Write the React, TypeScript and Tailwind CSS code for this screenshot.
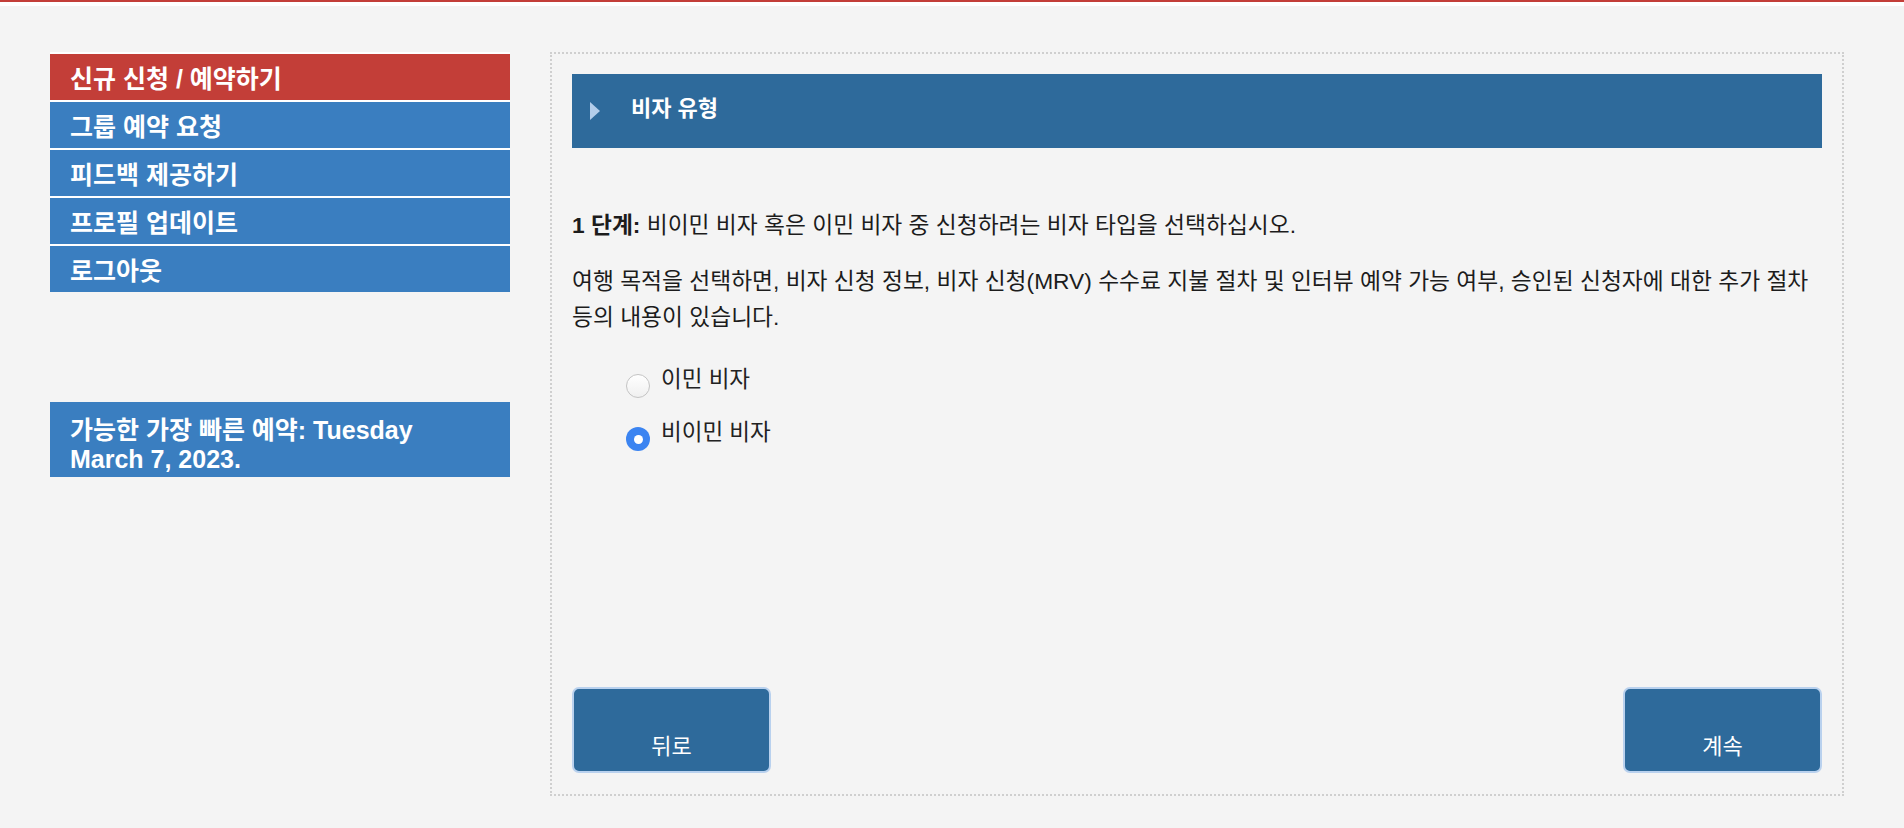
import { useState } from 'react';

const menu = ['신규 신청 / 예약하기', '그룹 예약 요청', '피드백 제공하기', '프로필 업데이트', '로그아웃'];

export default function App() {
  const [visa, setVisa] = useState('non');

  return (
    <div
      className="min-h-screen w-full bg-[#f4f4f4] text-[#1c1c1c]"
      style={{ fontFamily: '"Liberation Sans", "Noto Sans CJK KR", sans-serif' }}
    >
      {/* top strip */}
      <div className="h-[2px] bg-[#c33e38]" />
      <div className="h-[4px] bg-white" />

      <div className="flex gap-[40px] pl-[50px] pt-[46px]">
        {/* Sidebar */}
        <aside className="w-[460px] shrink-0">
          <ul>
            {menu.map((item, i) => (
              <li
                key={item}
                className={
                  'flex h-[48px] items-center border-t-2 border-white px-[20px] pt-[5px] text-[25px] font-bold text-white ' +
                  (i === 0 ? 'bg-[#c33e38]' : 'bg-[#3a7ec0]')
                }
              >
                {item}
              </li>
            ))}
          </ul>

          <div className="mt-[110px] bg-[#3a7ec0] px-[20px] pb-[3px] pt-[14px] text-[25px] font-bold leading-[29px] text-white">
            가능한 가장 빠른 예약: Tuesday
            <br />
            March 7, 2023.
          </div>
        </aside>

        {/* Main panel */}
        <main className="flex h-[744px] w-[1294px] flex-col border-2 border-dotted border-[#cfcfcf] p-[20px]">
          <div className="flex h-[74px] shrink-0 items-center bg-[#2e6a9b] pl-[18px]">
            <svg width="10" height="18" viewBox="0 0 10 18" className="shrink-0">
              <path d="M0 0 L10 9 L0 18 Z" fill="#b3cdea" />
            </svg>
            <h2 className="ml-[31px] -mt-[6px] text-[22px] font-bold text-white">비자 유형</h2>
          </div>

          <p className="mt-[59px] text-[22.75px] leading-[36px]">
            <b>1 단계:</b> 비이민 비자 혹은 이민 비자 중 신청하려는 비자 타입을 선택하십시오.
          </p>
          <p className="mt-[20px] text-[22.75px] leading-[36px]">
            여행 목적을 선택하면, 비자 신청 정보, 비자 신청(MRV) 수수료 지불 절차 및 인터뷰 예약 가능 여부, 승인된 신청자에 대한 추가 절차 등의 내용이 있습니다.
          </p>

          <div className="mt-[29px] pl-[54px]">
            {[
              { id: 'imm', label: '이민 비자' },
              { id: 'non', label: '비이민 비자' },
            ].map((opt) => (
              <label key={opt.id} className="flex h-[53px] cursor-pointer items-start gap-[11px]" onClick={() => setVisa(opt.id)}>
                {visa === opt.id ? (
                  <span className="mt-[10px] flex h-[24px] w-[24px] items-center justify-center rounded-full bg-[#3b84f1]">
                    <span className="h-[9px] w-[9px] rounded-full bg-white" />
                  </span>
                ) : (
                  <span className="mt-[10px] h-[24px] w-[24px] rounded-full border border-[#c4c4c4] bg-gradient-to-b from-white to-[#f0f0f0]" />
                )}
                <span className="text-[22.5px] leading-[31px] text-[#222]">{opt.label}</span>
              </label>
            ))}
          </div>

          <div className="mt-auto flex justify-between pb-[1px]">
            <button className="h-[86px] w-[199px] rounded-[7px] border-2 border-[#b9d1ee] bg-[#2e6a9b] pt-[33px] text-[22px] leading-[30px] text-white">
              뒤로
            </button>
            <button className="h-[86px] w-[199px] rounded-[7px] border-2 border-[#b9d1ee] bg-[#2e6a9b] pt-[33px] text-[22px] leading-[30px] text-white">
              계속
            </button>
          </div>
        </main>
      </div>
    </div>
  );
}
